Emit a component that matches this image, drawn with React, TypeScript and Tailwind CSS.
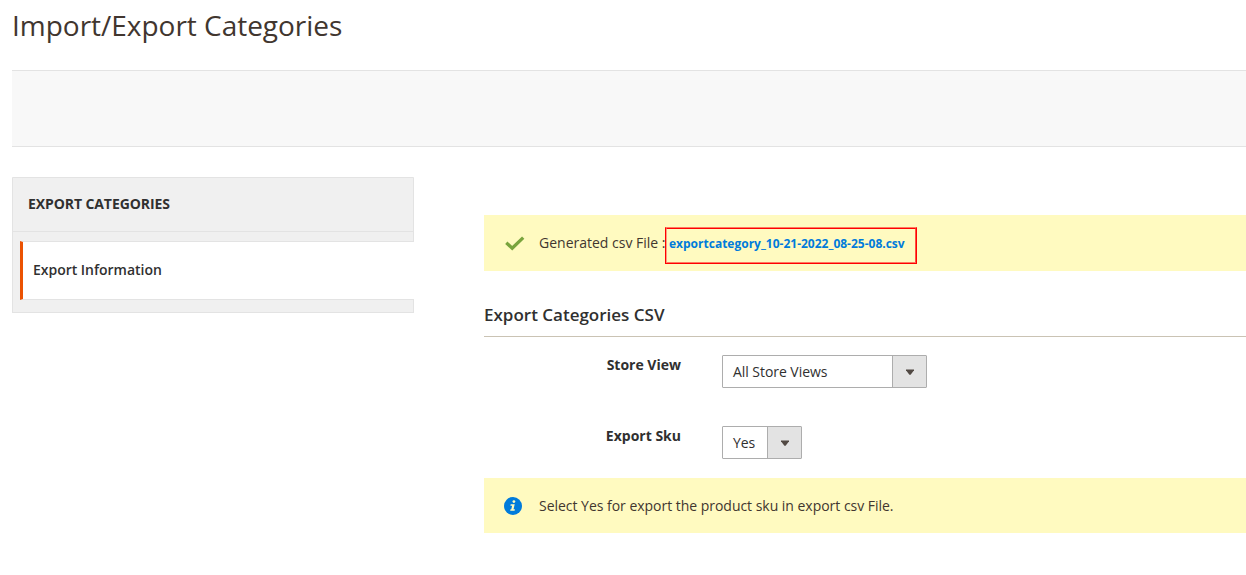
type SelectFieldProps = { id: string; label: string; value: string; boxClass: string };

function SelectField({ id, label, value, boxClass }: SelectFieldProps) {
  return (
    <div className="flex h-[33px] items-start">
      <span id={id} className="mr-[41px] w-[197px] text-right font-bold leading-5 text-[#303030]">
        {label}
      </span>
      <button
        type="button"
        aria-labelledby={id}
        className={`flex h-[33px] items-stretch rounded-[1px] border border-[#adadad] bg-white ${boxClass}`}
      >
        <span className="grow pl-[10px] text-left leading-[31px] tracking-[-0.05px] text-[#303030]">{value}</span>
        <span className="flex w-[34px] shrink-0 items-center justify-center border-l border-[#adadad] bg-[#e3e3e3]">
          <svg width="8" height="6" viewBox="0 0 8 6" fill="#514943">
            <path d="M0 .5h8v.8L4.6 5.8H3.4L0 1.3z" />
          </svg>
        </span>
      </button>
    </div>
  );
}

function Sidebar() {
  return (
    <aside className="h-[136px] w-[402px] shrink-0">
      <div className="h-[65px] rounded-br-[1px] border border-[#e3e3e3] bg-[#f0f0f0]">
        <h2 className="h-[54px] border-b border-[#e3e3e3] pl-[15px] pt-4 text-sm font-bold uppercase leading-5 tracking-[-0.09px] text-[#303030]">
          Export Categories
        </h2>
      </div>
      <div className="-mt-px flex h-[59px] border-l border-[#e3e3e3] bg-[#f0f0f0] pl-[7px]">
        <a className="flex grow items-center border-y border-l-[3px] border-y-[#e3e3e3] border-l-[#eb5202] bg-white pl-[10px] font-semibold text-[#303030]">
          <span className="-mt-px tracking-[-0.02px]">Export Information</span>
        </a>
      </div>
      <div className="-mt-px flex h-[14px] border border-t-0 border-[#e3e3e3] bg-[#f0f0f0]">
        <div className="ml-[10px] h-px grow bg-[#e3e3e3]" />
      </div>
    </aside>
  );
}

export default function App() {
  return (
    <div className="h-[575px] overflow-hidden bg-white pl-3 font-['Open_Sans',sans-serif] text-sm text-[#303030]">
      <header className="h-[70px] pt-[6px]">
        <h1 className="text-[28px] leading-[38px] tracking-[-0.02px] text-[#41362f]">Import/Export Categories</h1>
      </header>
      <div className="h-[77px] border-y border-[#e3e3e3] bg-[#f8f8f8]" />
      <div className="flex pt-[30px]">
        <Sidebar />
        <main className="ml-[70px] grow pt-[38px]">
          <div className="flex h-14 items-center bg-[#fffac0] pl-[21px]">
            <svg width="20" height="15" viewBox="0 0 20 15" fill="none" className="mt-px">
              <path d="M1.3 6.8L7.2 12.2L18.2 1.6" stroke="#79a43d" strokeWidth="3.3" />
            </svg>
            <span className="ml-[14px] w-[126px] whitespace-nowrap leading-5 text-[#41362f]">Generated csv File :</span>
            <a className="mt-[4px] h-[37px] w-[252px] border-x border-y border-x-[#ff0000] border-b-[#ff0000] border-t-[#ff7a60] text-xs font-bold text-[#007bdb]">
              <span className="flex h-[35px] items-center border-x border-y border-b-[#ff7a60] border-l-[#ff9a80] border-r-[#ff5040] border-t-[#ff0000] pl-[2px]">
                <span className="-mt-[3px]">exportcategory_10-21-2022_08-25-08.csv</span>
              </span>
            </a>
          </div>
          <h2 className="mt-8 h-[34px] border-b border-[#cac3b4] text-[17px] font-semibold leading-6 text-[#303030]">
            Export Categories CSV
          </h2>
          <div className="mt-[18px] flex flex-col gap-[38px]">
            <SelectField id="store-view" label="Store View" value="All Store Views" boxClass="w-[205px]" />
            <SelectField id="export-sku" label="Export Sku" value="Yes" boxClass="w-[80px]" />
          </div>
          <div className="mt-[19px] flex h-[55px] items-center bg-[#fffac0] pl-5">
            <svg width="18" height="18" viewBox="0 0 18 18">
              <circle cx="9" cy="9" r="9" fill="#007bdb" />
              <circle cx="9.9" cy="4.6" r="1.4" fill="#fffac0" />
              <path d="M6.7 7.2H10.7L9.5 12.3H10.9L10.6 13.8H6.2L6.5 12.3H7.3L8.1 8.7H6.4z" fill="#fffac0" />
            </svg>
            <span className="ml-[17px] leading-5 tracking-[-0.025px] text-[#41362f]">
              Select Yes for export the product sku in export csv File.
            </span>
          </div>
        </main>
      </div>
    </div>
  );
}
